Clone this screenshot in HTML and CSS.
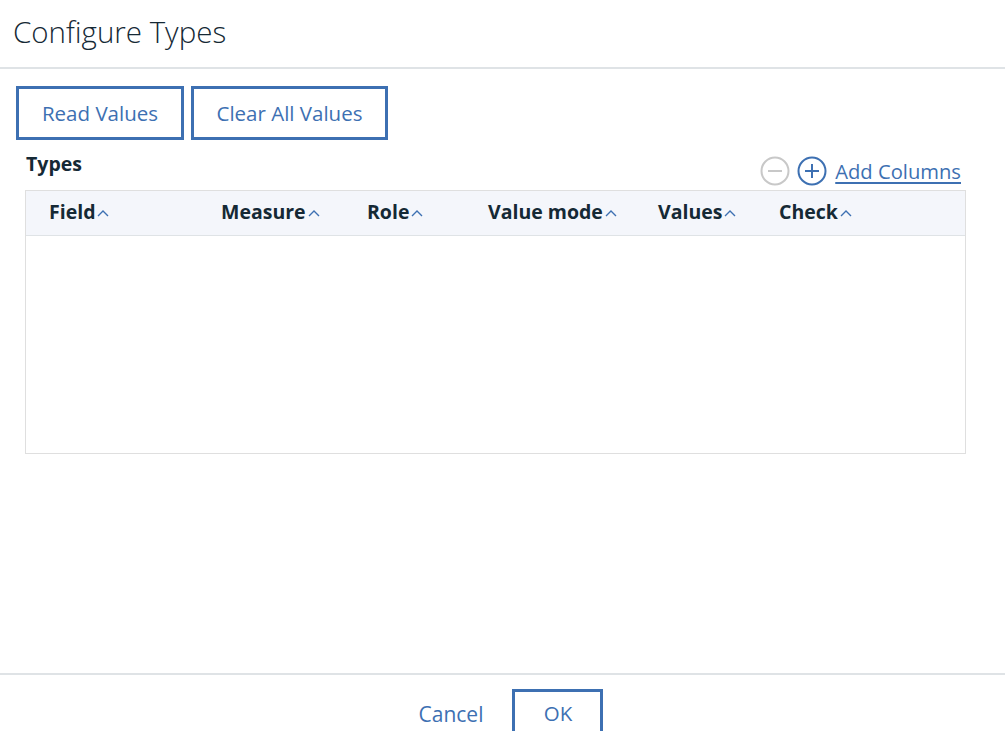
FILE: index.html
```html
<!DOCTYPE html>
<html lang="en">
<head>
<meta charset="utf-8">
<title>Configure Types</title>
<link rel="stylesheet" href="styles.css">
</head>
<body>
<div class="dialog">
  <header class="dlg-header">
    <h1 class="dlg-title">Configure Types</h1>
  </header>
  <main class="dlg-body">
    <div class="btn-row">
      <button class="btn btn-read">Read Values</button>
      <button class="btn btn-clear">Clear All Values</button>
    </div>
    <div class="toolbar">
      <div class="section-label">Types</div>
      <div class="tools">
        <svg class="circ-icon" width="30" height="30" viewBox="0 0 30 30" aria-hidden="true">
          <circle cx="15" cy="15" r="13.5" fill="none" stroke="#c8c8c8" stroke-width="2"/>
          <line x1="8" y1="15" x2="22" y2="15" stroke="#c8c8c8" stroke-width="2"/>
        </svg>
        <svg class="circ-icon" width="30" height="30" viewBox="0 0 30 30" aria-hidden="true">
          <circle cx="15" cy="15" r="13.5" fill="none" stroke="#3d70b2" stroke-width="2"/>
          <line x1="8" y1="15" x2="22" y2="15" stroke="#3d70b2" stroke-width="2"/>
          <line x1="15" y1="8" x2="15" y2="22" stroke="#3d70b2" stroke-width="2"/>
        </svg>
        <a class="add-link" href="#">Add Columns</a>
      </div>
    </div>
    <div class="table">
      <div class="thead">
        <div class="th">Field<svg class="chev" width="12" height="8" viewBox="0 0 12 8"><path d="M1 7 L6 2 L11 7" fill="none" stroke="#3d70b2" stroke-width="1.4"/></svg></div>
        <div class="th">Measure<svg class="chev" width="12" height="8" viewBox="0 0 12 8"><path d="M1 7 L6 2 L11 7" fill="none" stroke="#3d70b2" stroke-width="1.4"/></svg></div>
        <div class="th">Role<svg class="chev" width="12" height="8" viewBox="0 0 12 8"><path d="M1 7 L6 2 L11 7" fill="none" stroke="#3d70b2" stroke-width="1.4"/></svg></div>
        <div class="th">Value mode<svg class="chev" width="12" height="8" viewBox="0 0 12 8"><path d="M1 7 L6 2 L11 7" fill="none" stroke="#3d70b2" stroke-width="1.4"/></svg></div>
        <div class="th">Values<svg class="chev" width="12" height="8" viewBox="0 0 12 8"><path d="M1 7 L6 2 L11 7" fill="none" stroke="#3d70b2" stroke-width="1.4"/></svg></div>
        <div class="th">Check<svg class="chev" width="12" height="8" viewBox="0 0 12 8"><path d="M1 7 L6 2 L11 7" fill="none" stroke="#3d70b2" stroke-width="1.4"/></svg></div>
      </div>
      <div class="tbody"></div>
    </div>
  </main>
  <footer class="dlg-footer">
    <button class="btn-link">Cancel</button>
    <button class="btn btn-ok">OK</button>
  </footer>
</div>
</body>
</html>
```
FILE: styles.css
```css
* { box-sizing: border-box; }
html, body { margin: 0; padding: 0; }
body {
  font-family: "Open Sans", "Noto Sans", sans-serif;
  color: #152935;
  background: #fff;
  overflow: hidden;
}
.dialog {
  height: 731px;
  display: flex;
  flex-direction: column;
}
.dlg-header {
  height: 69px;
  border-bottom: 2px solid #dfe3e6;
  padding: 14px 0 0 13px;
}
.dlg-title {
  margin: 0;
  font-size: 29.5px;
  font-weight: 300;
  line-height: 36px;
  color: #152935;
}
.dlg-body {
  flex: 1;
  padding: 17px 39px 0 16px;
}
.btn-row {
  display: flex;
  gap: 7px;
}
.btn {
  font-family: inherit;
  background: #fff;
  border: 3px solid #3d70b2;
  color: #3d70b2;
  font-size: 20.5px;
  height: 54px;
  padding: 0;
  cursor: pointer;
}
.btn-read { width: 168px; }
.btn-clear { width: 197px; }
.toolbar {
  height: 50px;
  display: flex;
  justify-content: space-between;
  padding-left: 10px;
}
.section-label {
  font-weight: 700;
  font-size: 19.5px;
  line-height: 22px;
  margin-top: 13px;
}
.tools {
  display: flex;
  align-items: center;
  gap: 7px;
  align-self: flex-end;
  margin-bottom: 4px;
  margin-right: 5px;
}
.circ-icon { display: block; }
.add-link {
  color: #3d70b2;
  font-size: 20.2px;
  text-decoration: underline;
  text-underline-offset: 3px;
  margin-left: 1px;
  margin-bottom: 1px;
}
.table {
  margin-left: 9px;
  border: 1px solid #dfdfdf;
  height: 264px;
}
.thead {
  display: grid;
  grid-template-columns: 172px 146px 121px 170px 121px 1fr;
  background: #f4f6fb;
  border-bottom: 1px solid #dfe3e6;
  height: 45px;
  align-items: center;
  padding-left: 23px;
  padding-bottom: 3px;
}
.th {
  font-weight: 700;
  font-size: 19.5px;
  display: flex;
  align-items: center;
  color: #152935;
}
.chev {
  margin-left: 2px;
  margin-top: 3px;
}
.dlg-footer {
  height: 58px;
  border-top: 2px solid #dfe3e6;
  display: flex;
  justify-content: center;
  align-items: flex-start;
  padding-top: 14px;
  overflow: hidden;
  gap: 29px;
  padding-left: 17px;
}
.btn-link {
  font-family: inherit;
  background: none;
  border: none;
  color: #3d70b2;
  font-size: 21px;
  padding: 0;
  margin-top: 11px;
  cursor: pointer;
}
.btn-ok {
  width: 91px;
  height: 48px;
  flex-shrink: 0;
}
```
